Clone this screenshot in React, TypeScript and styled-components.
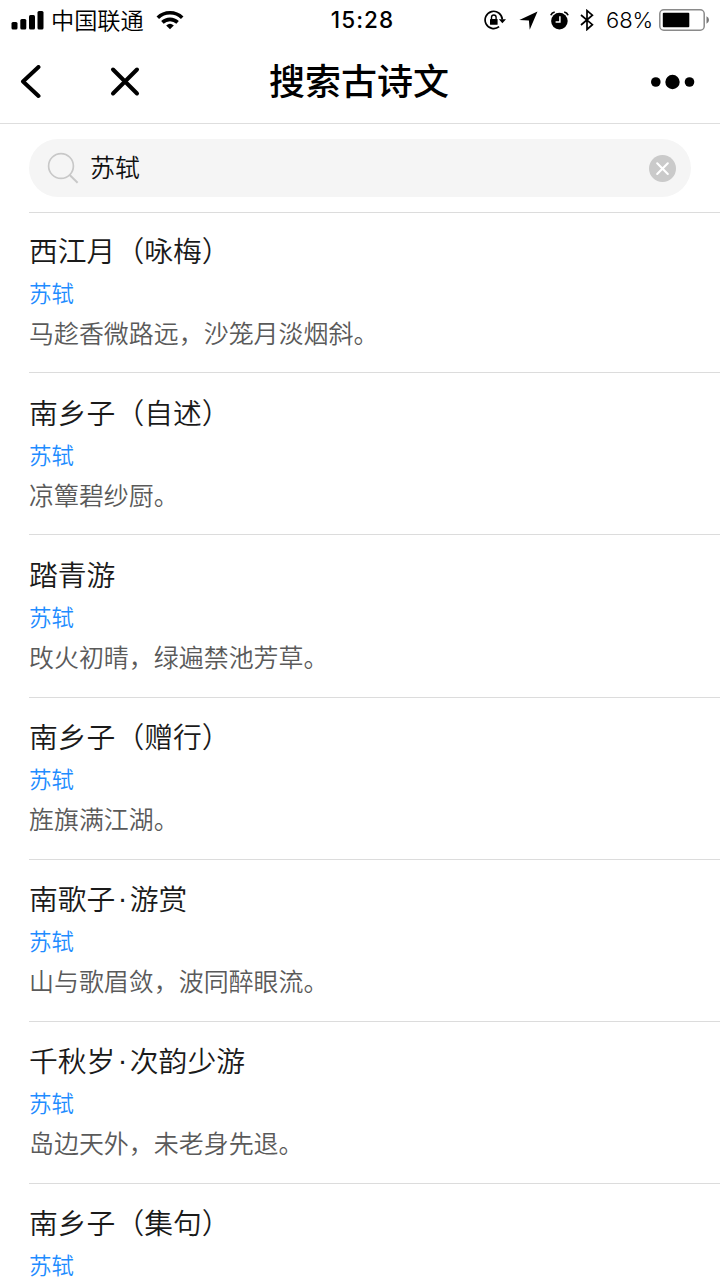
import React from 'react';
import styled, { createGlobalStyle } from 'styled-components';

const GlobalStyle = createGlobalStyle`
  * { box-sizing: border-box; }
  body {
    margin: 0;
    background: #fff;
    font-family: "Noto Sans CJK SC", sans-serif;
    font-weight: 350;
    color: #1a1a1a;
  }
`;

const Screen = styled.div`
  width: 720px;
  height: 1280px;
  overflow: hidden;
  background: #fff;
`;

const StatusBar = styled.div`
  display: grid;
  grid-template-columns: 1fr auto 1fr;
  align-items: center;
  height: 40px;
  padding: 0 10px 0 11px;
  color: #000;
`;

const StatusLeft = styled.div`
  display: flex;
  align-items: center;
`;

const StatusRight = styled.div`
  display: flex;
  align-items: center;
  justify-content: flex-end;
`;

const Carrier = styled.span`
  margin: 0 12px 0 7px;
  padding-bottom: 2px;
  font-size: 23.2px;
  line-height: 38px;
`;

const Clock = styled.span`
  padding-left: 4px;
  font-family: Inter, sans-serif;
  font-size: 22.5px;
  font-weight: 500;
  letter-spacing: 1.1px;
  line-height: 40px;
`;

const Percent = styled.span`
  margin: 0 6px 0 12px;
  font-family: Inter, sans-serif;
  font-size: 22px;
  letter-spacing: -0.1px;
  line-height: 40px;
`;

const Icon = styled.svg<{ $gap?: number }>`
  display: block;
  flex: none;
  margin-left: ${(p) => p.$gap ?? 0}px;
`;

const NavBar = styled.header`
  display: grid;
  grid-template-columns: 1fr auto 1fr;
  align-items: center;
  height: 84px;
  padding: 0 25px 0 19px;
  border-bottom: 1px solid #dedede;
  color: #000;
`;

const NavActions = styled.div<{ $end?: boolean }>`
  display: flex;
  justify-content: ${(p) => (p.$end ? 'flex-end' : 'flex-start')};
  gap: 66px;
`;

const NavButton = styled.button`
  padding: 0;
  border: 0;
  background: none;
  color: inherit;
`;

const NavTitle = styled.h1`
  margin: 0;
  padding: 0 0 5px 4px;
  font-size: 36px;
  font-weight: 500;
  line-height: 78px;
`;

const SearchArea = styled.div`
  padding: 15px 29px 15px;
`;

const SearchField = styled.div`
  display: flex;
  align-items: center;
  height: 58px;
  padding: 0 15px 0 18px;
  border-radius: 29px;
  background: #f5f5f5;
`;

const Query = styled.span`
  flex: 1;
  margin-left: 11px;
  padding-bottom: 4px;
  font-size: 25px;
  line-height: 54px;
  color: #111;
`;

const Results = styled.ul`
  margin: 0 0 0 29px;
  padding: 0;
  list-style: none;
  border-top: 1px solid #dcdcdc;
`;

const Result = styled.li`
  height: 162.1px;
  padding-top: 18.6px;
  border-bottom: 1px solid #dcdcdc;

  &:first-child {
    height: 160.4px;
    padding-top: 17px;
  }
`;

const PoemTitle = styled.h2`
  display: flex;
  margin: 0;
  font-size: 28.8px;
  font-weight: inherit;
  line-height: 40px;
`;

const Dot = styled.span`
  width: 14.4px;
  font-family: "Liberation Sans", sans-serif;
  text-align: center;
`;

const Author = styled.div`
  font-size: 22.5px;
  line-height: 44px;
  color: #1e8cff;
`;

const Verse = styled.p`
  margin: 0;
  font-size: 24.96px;
  line-height: 37px;
  color: #5a5a5a;
`;

const poems: { title: string; verse?: string }[] = [
  { title: '西江月（咏梅）', verse: '马趁香微路远，沙笼月淡烟斜。' },
  { title: '南乡子（自述）', verse: '凉簟碧纱厨。' },
  { title: '踏青游', verse: '攺火初晴，绿遍禁池芳草。' },
  { title: '南乡子（赠行）', verse: '旌旗满江湖。' },
  { title: '南歌子·游赏', verse: '山与歌眉敛，波同醉眼流。' },
  { title: '千秋岁·次韵少游', verse: '岛边天外，未老身先退。' },
  { title: '南乡子（集句）' },
];

const SignalIcon = () => (
  <Icon width="33" height="20" viewBox="0 0 33 20">
    <rect x="0.5" y="12" width="6" height="7.5" rx="1.5" />
    <rect x="9.3" y="9" width="6" height="10.5" rx="1.5" />
    <rect x="18" y="5" width="6" height="14.5" rx="1.5" />
    <rect x="26.5" y="1" width="6" height="18.5" rx="1.5" />
  </Icon>
);

const WifiIcon = () => (
  <Icon width="28" height="20" viewBox="0 0 28 20" fill="none" stroke="#000" strokeWidth="3.6">
    <path d="M1.8 7.8C8.5 1.1 19.5 1.1 26.2 7.8" />
    <path d="M6.4 12.4C10.7 8.3 17.3 8.3 21.6 12.4" />
    <path d="M14 19.3L10.2 15.5Q14 12.2 17.8 15.5Z" fill="#000" stroke="none" />
  </Icon>
);

const RotationLockIcon = () => (
  <Icon width="22" height="20" viewBox="0 0 22 20">
    <path d="M15.1 16.6A8.6 8.6 0 1 1 18.3 9.5" fill="none" stroke="#000" strokeWidth="1.7" />
    <path d="M14.8 9.3H22L18.4 13.2Z" />
    <rect x="6" y="9" width="7.6" height="5.8" rx="0.6" />
    <path d="M7.5 9.5V7.3a2.3 2.3 0 0 1 4.6 0V9.5" fill="none" stroke="#000" strokeWidth="1.4" />
  </Icon>
);

const LocationIcon = () => (
  <Icon $gap={13} width="19" height="19" viewBox="0 0 19 19">
    <path d="M18.5 0.5L10.7 18.8L9.9 9.6L0.4 8.9Z" />
  </Icon>
);

const AlarmIcon = () => (
  <Icon $gap={12} width="19" height="19" viewBox="0 0 19 19">
    <circle cx="9.4" cy="10.1" r="8.3" />
    <path d="M0.8 4.3Q1.8 1.7 4.7 1M18.1 4.3Q17.1 1.7 14.2 1" fill="none" stroke="#000" strokeWidth="1.7" />
    <path d="M9.9 5.2V11H5.6" fill="none" stroke="#fff" strokeWidth="1.5" />
  </Icon>
);

const BluetoothIcon = () => (
  <Icon $gap={11} width="14" height="22" viewBox="0 0 14 22" fill="none" stroke="#000" strokeWidth="1.7">
    <path d="M1 6L12.4 15.7L7 20.5V1.6L12.4 6.2L1 16" />
  </Icon>
);

const BatteryIcon = () => (
  <Icon width="51" height="22" viewBox="0 0 51 22">
    <rect x="0.8" y="0.8" width="44.4" height="20.4" rx="4" fill="none" stroke="#8a8a8a" strokeWidth="1.5" />
    <rect x="3.8" y="3.8" width="26.5" height="14.4" rx="1" />
    <path d="M47.5 7.3Q50 8.4 50 11T47.5 14.7Z" fill="#777" />
  </Icon>
);

const SearchIcon = () => (
  <Icon width="32" height="32" viewBox="0 0 32 32" fill="none" stroke="#c8c8c8" strokeWidth="1.7">
    <circle cx="14" cy="14" r="12.4" />
    <path d="M22.7 23L30.6 30.7" strokeWidth="2" />
  </Icon>
);

const ClearIcon = () => (
  <Icon width="27" height="27" viewBox="0 0 27 27">
    <circle cx="13.5" cy="13.5" r="13.5" fill="#cacaca" />
    <path d="M8.2 8.3L18.8 18.9M18.8 8.3L8.2 18.9" stroke="#fff" strokeWidth="2.1" strokeLinecap="round" />
  </Icon>
);

const PoemHeading = ({ title }: { title: string }) => {
  const [name, subtitle] = title.split('·');
  return (
    <PoemTitle>
      {name}
      {subtitle && <Dot>·</Dot>}
      {subtitle}
    </PoemTitle>
  );
};

export default function App() {
  return (
    <>
      <GlobalStyle />
      <Screen>
        <StatusBar>
          <StatusLeft>
            <SignalIcon />
            <Carrier>中国联通</Carrier>
            <WifiIcon />
          </StatusLeft>
          <Clock>15:28</Clock>
          <StatusRight>
            <RotationLockIcon />
            <LocationIcon />
            <AlarmIcon />
            <BluetoothIcon />
            <Percent>68%</Percent>
            <BatteryIcon />
          </StatusRight>
        </StatusBar>
        <NavBar>
          <NavActions>
            <NavButton aria-label="返回">
              <Icon width="24" height="34" viewBox="0 0 24 34" fill="none" stroke="#000" strokeWidth="4" strokeLinecap="round" strokeLinejoin="round">
                <path d="M19.5 2L4 16.5L19.5 31" />
              </Icon>
            </NavButton>
            <NavButton aria-label="关闭">
              <Icon width="32" height="34" viewBox="0 0 32 34" fill="none" stroke="#000" strokeWidth="4" strokeLinecap="round">
                <path d="M4 4.5L28 28.5M28 4.5L4 28.5" />
              </Icon>
            </NavButton>
          </NavActions>
          <NavTitle>搜索古诗文</NavTitle>
          <NavActions $end>
            <NavButton aria-label="更多">
              <Icon width="45" height="16" viewBox="0 0 45 16">
                <circle cx="5.8" cy="8" r="4.8" />
                <circle cx="22.5" cy="8" r="7.2" />
                <circle cx="39.5" cy="8" r="4.8" />
              </Icon>
            </NavButton>
          </NavActions>
        </NavBar>
        <SearchArea>
          <SearchField>
            <SearchIcon />
            <Query>苏轼</Query>
            <ClearIcon />
          </SearchField>
        </SearchArea>
        <Results>
          {poems.map((poem) => (
            <Result key={poem.title}>
              <PoemHeading title={poem.title} />
              <Author>苏轼</Author>
              {poem.verse && <Verse>{poem.verse}</Verse>}
            </Result>
          ))}
        </Results>
      </Screen>
    </>
  );
}
